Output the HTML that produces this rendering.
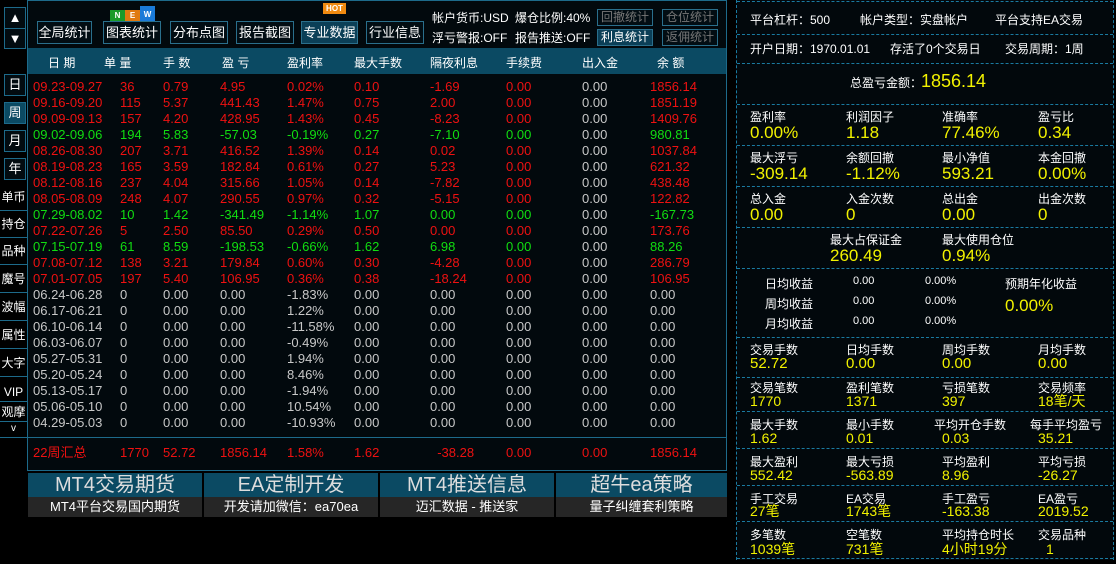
<!DOCTYPE html>
<html><head><meta charset="utf-8"><style>
*{margin:0;padding:0;box-sizing:border-box}
body{width:1116px;height:564px;background:#000;overflow:hidden;position:relative;font-family:"Liberation Sans","Noto Sans CJK SC",sans-serif;color:#fff}
.a{position:absolute;white-space:nowrap}
.sb{position:absolute;left:4px;width:22px;border:1px solid #1d6a8a;text-align:center;font-size:13px;line-height:20px;color:#fff;background:#020b10}
.sb2{position:absolute;left:0;width:27px;text-align:center;font-size:12px;color:#fff;border-bottom:1px solid #1d6a8a;height:27px;line-height:26px}
.btn{position:absolute;top:21px;height:23px;border:1px solid #2a6f8c;font-size:13px;line-height:21px;text-align:center;color:#fff;background:#020d13}
.btn2{position:absolute;height:17px;border:1px solid #2a6f8c;font-size:12px;line-height:15px;text-align:center;color:#777;background:#020d13}
.hd{position:absolute;top:54px;font-size:12px;color:#fff}
.tb{position:absolute;left:33px;font-size:13px}
.r{display:flex;height:16px;line-height:16px;overflow:hidden;white-space:nowrap}
.r span{display:block;flex:none}
.r span:nth-child(1){width:87px}.r span:nth-child(2){width:43px}.r span:nth-child(3){width:57px}.r span:nth-child(4){width:67px}.r span:nth-child(5){width:67px}.r span:nth-child(6){width:76px}.r span:nth-child(7){width:76px}.r span:nth-child(8){width:76px}.r span:nth-child(9){width:68px}.r span:nth-child(10){width:77px}
.R{color:#ee1111}.G{color:#11dd11}.W{color:#c8c8c8}
.R span:nth-child(9),.G span:nth-child(9){color:#c8c8c8}
.ban{position:absolute;top:473px;height:44px;width:174px;text-align:center}
.ban .t{height:24px;background:#0b4a63;color:#ddd;font-size:20px;line-height:24px}
.ban .b{height:20px;background:#262626;color:#fff;font-size:13px;line-height:20px}
.hl{position:absolute;left:737px;width:376px;border-top:1px dashed #1a7aa0}
.l{position:absolute;font-size:12px;color:#fff;white-space:nowrap}
.v{position:absolute;font-size:17px;color:#f2f200;white-space:nowrap;line-height:17px}
</style></head><body>
<div class="sb" style="top:7px;height:22px;line-height:20px">▲</div>
<div class="sb" style="top:28px;height:21px;line-height:19px">▼</div>
<div class="sb" style="top:74px;height:22px">日</div>
<div class="sb" style="top:102px;height:22px;background:#0b4a63">周</div>
<div class="sb" style="top:130px;height:22px">月</div>
<div class="sb" style="top:158px;height:22px">年</div>
<div class="sb2" style="top:184px">单币</div>
<div class="sb2" style="top:211px">持仓</div>
<div class="sb2" style="top:238px">品种</div>
<div class="sb2" style="top:266px">魔号</div>
<div class="sb2" style="top:294px">波幅</div>
<div class="sb2" style="top:322px">属性</div>
<div class="sb2" style="top:350px">大字</div>
<div class="sb2" style="top:380px;height:22px;line-height:24px">VIP</div>
<div class="sb2" style="top:402px;height:20px;line-height:20px">观摩</div>
<div class="sb2" style="top:422px;height:16px;line-height:14px;font-size:10px">v</div>
<div class="a" style="left:27px;top:0;width:700px;height:471px;border:1px solid #1d6a8a;background:#02090d"></div>
<div class="a" style="left:28px;top:48px;width:698px;height:26px;background:#0b4a63"></div>
<div class="a" style="left:28px;top:437px;width:698px;border-top:1px solid #1d6a8a"></div>
<div class="btn" style="left:37px;width:55px">全局统计</div>
<div class="btn" style="left:103px;width:58px">图表统计</div>
<div class="btn" style="left:170px;width:58px">分布点图</div>
<div class="btn" style="left:236px;width:58px">报告截图</div>
<div class="btn" style="left:301px;width:57px;background:#0b3f57">专业数据</div>
<div class="btn" style="left:366px;width:58px">行业信息</div>
<div class="a" style="left:110px;top:10px;width:15px;height:11px;background:#1a9a2a;font-size:8px;line-height:11px;text-align:center;font-weight:bold">N</div>
<div class="a" style="left:125px;top:10px;width:15px;height:11px;background:#e07a10;font-size:8px;line-height:11px;text-align:center;font-weight:bold">E</div>
<div class="a" style="left:140px;top:6px;width:15px;height:15px;background:#1a7ad8;font-size:8px;line-height:18px;text-align:center;font-weight:bold">W</div>
<div class="a" style="left:323px;top:3px;width:23px;height:11px;background:#f08a10;font-size:8px;line-height:11px;text-align:center;font-weight:bold">HOT</div>
<div class="a" style="left:432px;top:9px;font-size:12px">帐户货币:USD</div>
<div class="a" style="left:515px;top:9px;font-size:12px">爆仓比例:40%</div>
<div class="a" style="left:432px;top:29px;font-size:12px">浮亏警报:OFF</div>
<div class="a" style="left:515px;top:29px;font-size:12px">报告推送:OFF</div>
<div class="btn2" style="left:597px;top:9px;width:56px">回撤统计</div>
<div class="btn2" style="left:662px;top:9px;width:56px">仓位统计</div>
<div class="btn2" style="left:597px;top:29px;width:56px;background:#0b3f57;color:#fff">利息统计</div>
<div class="btn2" style="left:662px;top:29px;width:56px">返佣统计</div>
<div class="hd" style="left:48px">日 期</div>
<div class="hd" style="left:104px">单 量</div>
<div class="hd" style="left:163px">手 数</div>
<div class="hd" style="left:222px">盈 亏</div>
<div class="hd" style="left:287px">盈利率</div>
<div class="hd" style="left:354px">最大手数</div>
<div class="hd" style="left:430px">隔夜利息</div>
<div class="hd" style="left:506px">手续费</div>
<div class="hd" style="left:582px">出入金</div>
<div class="hd" style="left:657px">余 额</div>
<div class="tb" style="top:79px">
<div class="r R"><span>09.23-09.27</span><span>36</span><span>0.79</span><span>4.95</span><span>0.02%</span><span>0.10</span><span>-1.69</span><span>0.00</span><span>0.00</span><span>1856.14</span></div>
<div class="r R"><span>09.16-09.20</span><span>115</span><span>5.37</span><span>441.43</span><span>1.47%</span><span>0.75</span><span>2.00</span><span>0.00</span><span>0.00</span><span>1851.19</span></div>
<div class="r R"><span>09.09-09.13</span><span>157</span><span>4.20</span><span>428.95</span><span>1.43%</span><span>0.45</span><span>-8.23</span><span>0.00</span><span>0.00</span><span>1409.76</span></div>
<div class="r G"><span>09.02-09.06</span><span>194</span><span>5.83</span><span>-57.03</span><span>-0.19%</span><span>0.27</span><span>-7.10</span><span>0.00</span><span>0.00</span><span>980.81</span></div>
<div class="r R"><span>08.26-08.30</span><span>207</span><span>3.71</span><span>416.52</span><span>1.39%</span><span>0.14</span><span>0.02</span><span>0.00</span><span>0.00</span><span>1037.84</span></div>
<div class="r R"><span>08.19-08.23</span><span>165</span><span>3.59</span><span>182.84</span><span>0.61%</span><span>0.27</span><span>5.23</span><span>0.00</span><span>0.00</span><span>621.32</span></div>
<div class="r R"><span>08.12-08.16</span><span>237</span><span>4.04</span><span>315.66</span><span>1.05%</span><span>0.14</span><span>-7.82</span><span>0.00</span><span>0.00</span><span>438.48</span></div>
<div class="r R"><span>08.05-08.09</span><span>248</span><span>4.07</span><span>290.55</span><span>0.97%</span><span>0.32</span><span>-5.15</span><span>0.00</span><span>0.00</span><span>122.82</span></div>
<div class="r G"><span>07.29-08.02</span><span>10</span><span>1.42</span><span>-341.49</span><span>-1.14%</span><span>1.07</span><span>0.00</span><span>0.00</span><span>0.00</span><span>-167.73</span></div>
<div class="r R"><span>07.22-07.26</span><span>5</span><span>2.50</span><span>85.50</span><span>0.29%</span><span>0.50</span><span>0.00</span><span>0.00</span><span>0.00</span><span>173.76</span></div>
<div class="r G"><span>07.15-07.19</span><span>61</span><span>8.59</span><span>-198.53</span><span>-0.66%</span><span>1.62</span><span>6.98</span><span>0.00</span><span>0.00</span><span>88.26</span></div>
<div class="r R"><span>07.08-07.12</span><span>138</span><span>3.21</span><span>179.84</span><span>0.60%</span><span>0.30</span><span>-4.28</span><span>0.00</span><span>0.00</span><span>286.79</span></div>
<div class="r R"><span>07.01-07.05</span><span>197</span><span>5.40</span><span>106.95</span><span>0.36%</span><span>0.38</span><span>-18.24</span><span>0.00</span><span>0.00</span><span>106.95</span></div>
<div class="r W"><span>06.24-06.28</span><span>0</span><span>0.00</span><span>0.00</span><span>-1.83%</span><span>0.00</span><span>0.00</span><span>0.00</span><span>0.00</span><span>0.00</span></div>
<div class="r W"><span>06.17-06.21</span><span>0</span><span>0.00</span><span>0.00</span><span>1.22%</span><span>0.00</span><span>0.00</span><span>0.00</span><span>0.00</span><span>0.00</span></div>
<div class="r W"><span>06.10-06.14</span><span>0</span><span>0.00</span><span>0.00</span><span>-11.58%</span><span>0.00</span><span>0.00</span><span>0.00</span><span>0.00</span><span>0.00</span></div>
<div class="r W"><span>06.03-06.07</span><span>0</span><span>0.00</span><span>0.00</span><span>-0.49%</span><span>0.00</span><span>0.00</span><span>0.00</span><span>0.00</span><span>0.00</span></div>
<div class="r W"><span>05.27-05.31</span><span>0</span><span>0.00</span><span>0.00</span><span>1.94%</span><span>0.00</span><span>0.00</span><span>0.00</span><span>0.00</span><span>0.00</span></div>
<div class="r W"><span>05.20-05.24</span><span>0</span><span>0.00</span><span>0.00</span><span>8.46%</span><span>0.00</span><span>0.00</span><span>0.00</span><span>0.00</span><span>0.00</span></div>
<div class="r W"><span>05.13-05.17</span><span>0</span><span>0.00</span><span>0.00</span><span>-1.94%</span><span>0.00</span><span>0.00</span><span>0.00</span><span>0.00</span><span>0.00</span></div>
<div class="r W"><span>05.06-05.10</span><span>0</span><span>0.00</span><span>0.00</span><span>10.54%</span><span>0.00</span><span>0.00</span><span>0.00</span><span>0.00</span><span>0.00</span></div>
<div class="r W"><span>04.29-05.03</span><span>0</span><span>0.00</span><span>0.00</span><span>-10.93%</span><span>0.00</span><span>0.00</span><span>0.00</span><span>0.00</span><span>0.00</span></div>
</div>
<div class="tb" style="top:445px">
<div class="r R"><span>22周汇总</span><span>1770</span><span>52.72</span><span>1856.14</span><span>1.58%</span><span>1.62</span><span>&nbsp;&nbsp;-38.28</span><span>0.00</span><span style="color:#ee1111">0.00</span><span>1856.14</span></div>
</div>
<div class="ban" style="left:28px"><div class="t">MT4交易期货</div><div class="b">MT4平台交易国内期货</div></div>
<div class="ban" style="left:204px"><div class="t">EA定制开发</div><div class="b">开发请加微信：ea70ea</div></div>
<div class="ban" style="left:380px"><div class="t">MT4推送信息</div><div class="b">迈汇数据 - 推送家</div></div>
<div class="ban" style="left:556px;width:171px"><div class="t">超牛ea策略</div><div class="b">量子纠缠套利策略</div></div>
<div class="a" style="left:736px;top:0;width:378px;height:560px;border-left:1px dashed #1a7aa0;border-right:1px dashed #1a7aa0;background:#02080c"></div>
<div class="hl" style="top:1px"></div><div class="hl" style="top:34px"></div><div class="hl" style="top:63px"></div><div class="hl" style="top:104px"></div><div class="hl" style="top:145px"></div><div class="hl" style="top:186px"></div><div class="hl" style="top:227px"></div><div class="hl" style="top:268px"></div><div class="hl" style="top:337px"></div><div class="hl" style="top:377px"></div><div class="hl" style="top:411px"></div><div class="hl" style="top:448px"></div><div class="hl" style="top:485px"></div><div class="hl" style="top:521px"></div><div class="hl" style="top:558px"></div>
<div class="l" style="left:750px;top:11px">平台杠杆：500</div>
<div class="l" style="left:860px;top:11px">帐户类型：实盘帐户</div>
<div class="l" style="left:995px;top:11px">平台支持EA交易</div>
<div class="l" style="left:750px;top:40px">开户日期：1970.01.01</div>
<div class="l" style="left:890px;top:40px">存活了0个交易日</div>
<div class="l" style="left:1005px;top:40px">交易周期：1周</div>
<div class="l" style="left:850px;top:74px">总盈亏金额：</div>
<div class="v" style="left:921px;top:72px;font-size:18px;line-height:18px">1856.14</div>

<div class="l" style="left:750px;top:108px">盈利率</div><div class="v" style="left:750px;top:124px">0.00%</div>
<div class="l" style="left:846px;top:108px">利润因子</div><div class="v" style="left:846px;top:124px">1.18</div>
<div class="l" style="left:942px;top:108px">准确率</div><div class="v" style="left:942px;top:124px">77.46%</div>
<div class="l" style="left:1038px;top:108px">盈亏比</div><div class="v" style="left:1038px;top:124px">0.34</div>

<div class="l" style="left:750px;top:149px">最大浮亏</div><div class="v" style="left:750px;top:165px">-309.14</div>
<div class="l" style="left:846px;top:149px">余额回撤</div><div class="v" style="left:846px;top:165px">-1.12%</div>
<div class="l" style="left:942px;top:149px">最小净值</div><div class="v" style="left:942px;top:165px">593.21</div>
<div class="l" style="left:1038px;top:149px">本金回撤</div><div class="v" style="left:1038px;top:165px">0.00%</div>

<div class="l" style="left:750px;top:190px">总入金</div><div class="v" style="left:750px;top:206px">0.00</div>
<div class="l" style="left:846px;top:190px">入金次数</div><div class="v" style="left:846px;top:206px">0</div>
<div class="l" style="left:942px;top:190px">总出金</div><div class="v" style="left:942px;top:206px">0.00</div>
<div class="l" style="left:1038px;top:190px">出金次数</div><div class="v" style="left:1038px;top:206px">0</div>

<div class="l" style="left:830px;top:231px">最大占保证金</div><div class="v" style="left:830px;top:247px">260.49</div>
<div class="l" style="left:942px;top:231px">最大使用仓位</div><div class="v" style="left:942px;top:247px">0.94%</div>

<div class="l" style="left:765px;top:275px">日均收益</div><div class="l" style="left:853px;top:275px;font-size:11px">0.00</div><div class="l" style="left:925px;top:275px;font-size:11px">0.00%</div>
<div class="l" style="left:765px;top:295px">周均收益</div><div class="l" style="left:853px;top:295px;font-size:11px">0.00</div><div class="l" style="left:925px;top:295px;font-size:11px">0.00%</div>
<div class="l" style="left:765px;top:315px">月均收益</div><div class="l" style="left:853px;top:315px;font-size:11px">0.00</div><div class="l" style="left:925px;top:315px;font-size:11px">0.00%</div>
<div class="l" style="left:1005px;top:275px">预期年化收益</div><div class="v" style="left:1005px;top:297px">0.00%</div>

<div class="l" style="left:750px;top:341px">交易手数</div><div class="v" style="left:750px;top:356px;font-size:15px;line-height:15px">52.72</div>
<div class="l" style="left:846px;top:341px">日均手数</div><div class="v" style="left:846px;top:356px;font-size:15px;line-height:15px">0.00</div>
<div class="l" style="left:942px;top:341px">周均手数</div><div class="v" style="left:942px;top:356px;font-size:15px;line-height:15px">0.00</div>
<div class="l" style="left:1038px;top:341px">月均手数</div><div class="v" style="left:1038px;top:356px;font-size:15px;line-height:15px">0.00</div>

<div class="l" style="left:750px;top:379px">交易笔数</div><div class="v" style="left:750px;top:394px;font-size:14px;line-height:15px">1770</div>
<div class="l" style="left:846px;top:379px">盈利笔数</div><div class="v" style="left:846px;top:394px;font-size:14px;line-height:15px">1371</div>
<div class="l" style="left:942px;top:379px">亏损笔数</div><div class="v" style="left:942px;top:394px;font-size:14px;line-height:15px">397</div>
<div class="l" style="left:1038px;top:379px">交易频率</div><div class="v" style="left:1038px;top:394px;font-size:14px;line-height:15px">18笔/天</div>

<div class="l" style="left:750px;top:416px">最大手数</div><div class="v" style="left:750px;top:431px;font-size:14px;line-height:15px">1.62</div>
<div class="l" style="left:846px;top:416px">最小手数</div><div class="v" style="left:846px;top:431px;font-size:14px;line-height:15px">0.01</div>
<div class="l" style="left:934px;top:416px">平均开仓手数</div><div class="v" style="left:942px;top:431px;font-size:14px;line-height:15px">0.03</div>
<div class="l" style="left:1030px;top:416px">每手平均盈亏</div><div class="v" style="left:1038px;top:431px;font-size:14px;line-height:15px">35.21</div>

<div class="l" style="left:750px;top:453px">最大盈利</div><div class="v" style="left:750px;top:468px;font-size:14px;line-height:15px">552.42</div>
<div class="l" style="left:846px;top:453px">最大亏损</div><div class="v" style="left:846px;top:468px;font-size:14px;line-height:15px">-563.89</div>
<div class="l" style="left:942px;top:453px">平均盈利</div><div class="v" style="left:942px;top:468px;font-size:14px;line-height:15px">8.96</div>
<div class="l" style="left:1038px;top:453px">平均亏损</div><div class="v" style="left:1038px;top:468px;font-size:14px;line-height:15px">-26.27</div>

<div class="l" style="left:750px;top:490px">手工交易</div><div class="v" style="left:750px;top:504px;font-size:14px;line-height:15px">27笔</div>
<div class="l" style="left:846px;top:490px">EA交易</div><div class="v" style="left:846px;top:504px;font-size:14px;line-height:15px">1743笔</div>
<div class="l" style="left:942px;top:490px">手工盈亏</div><div class="v" style="left:942px;top:504px;font-size:14px;line-height:15px">-163.38</div>
<div class="l" style="left:1038px;top:490px">EA盈亏</div><div class="v" style="left:1038px;top:504px;font-size:14px;line-height:15px">2019.52</div>

<div class="l" style="left:750px;top:526px">多笔数</div><div class="v" style="left:750px;top:542px;font-size:14px;line-height:15px">1039笔</div>
<div class="l" style="left:846px;top:526px">空笔数</div><div class="v" style="left:846px;top:542px;font-size:14px;line-height:15px">731笔</div>
<div class="l" style="left:942px;top:526px">平均持仓时长</div><div class="v" style="left:942px;top:542px;font-size:14px;line-height:15px">4小时19分</div>
<div class="l" style="left:1038px;top:526px">交易品种</div><div class="v" style="left:1046px;top:542px;font-size:14px;line-height:15px">1</div>
</body></html>
